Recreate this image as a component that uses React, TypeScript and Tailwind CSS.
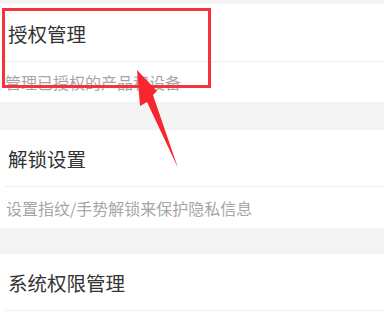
export default function App() {
  const font = { fontFamily: '"Noto Sans CJK SC", "Noto Sans", sans-serif' };
  return (
    <div className="relative w-[384px] h-[314px] overflow-hidden bg-[#f4f4f4]" style={font}>
      <div className="h-[4px]" />
      <section className="bg-white">
        <div className="h-[57px] flex items-center pl-[8px] pt-[3px] text-[19.5px] text-[#333] leading-none">
          授权管理
        </div>
        <div className="ml-[5px] h-px bg-[#eeeeee]" />
        <div className="h-[40px] flex items-center pl-[5px] text-[16px] text-[#a6a6a6] leading-none">
          管理已授权的产品和设备
        </div>
      </section>
      <div className="h-[28px]" />
      <section className="bg-white">
        <div className="h-[56px] flex items-center pl-[8px] pt-[1px] text-[19.5px] text-[#333] leading-none">
          解锁设置
        </div>
        <div className="ml-[5px] h-px bg-[#eeeeee]" />
        <div className="h-[41px] flex items-center pl-[6px] text-[16px] text-[#a6a6a6] leading-none">
          设置指纹/手势解锁来保护隐私信息
        </div>
      </section>
      <div className="h-[26px]" />
      <section className="bg-white">
        <div className="h-[56px] flex items-center pl-[8px] pt-[2px] text-[19.5px] text-[#333] leading-none">
          系统权限管理
        </div>
        <div className="ml-[5px] h-px bg-[#eeeeee]" />
        <div className="h-[20px]" />
      </section>

      {/* annotation overlay */}
      <div className="absolute left-[2px] top-[8px] w-[209px] h-[80px] border-[3px] border-[#f5333c]" />
      <svg className="absolute left-0 top-0" width="384" height="314" viewBox="0 0 384 314">
        <polygon
          points="137,70 157,91 153,95 178,168 147,102 140,106"
          fill="#f7262f"
        />
      </svg>
    </div>
  );
}
